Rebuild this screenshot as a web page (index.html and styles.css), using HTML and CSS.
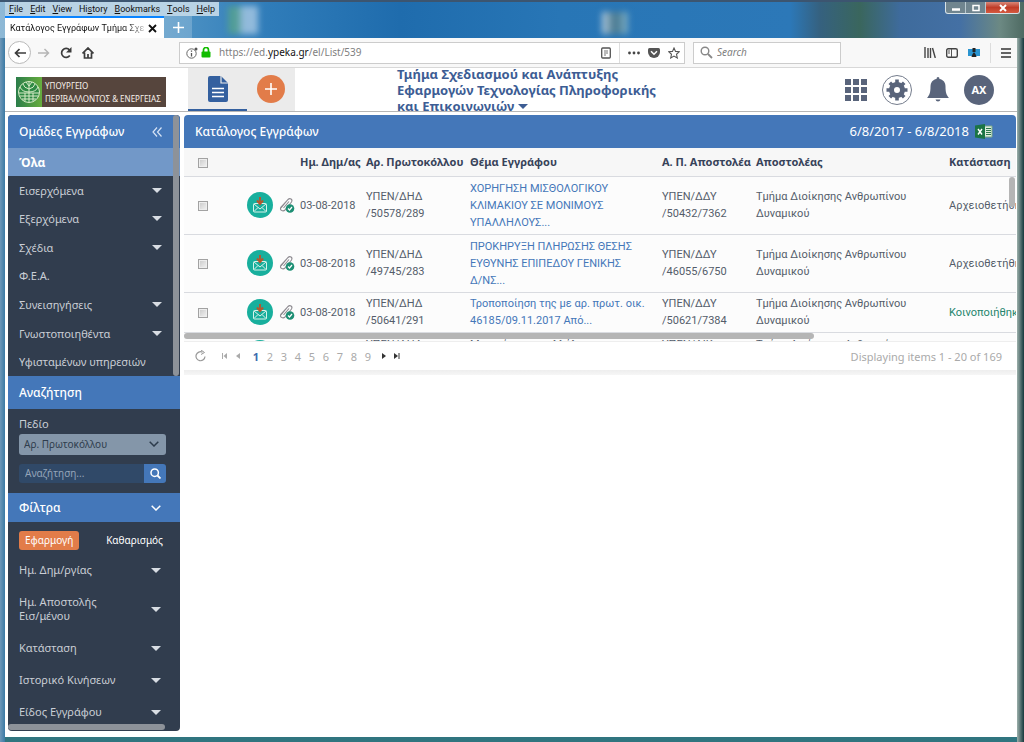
FILE: index.html
```html
<!DOCTYPE html>
<html lang="el">
<head>
<meta charset="utf-8">
<title>Κατάλογος Εγγράφων Τμήμα Σχεδιασμού</title>
<link rel="stylesheet" href="styles.css">
</head>
<body>
<svg class="defs" aria-hidden="true">
  <symbol id="mail" viewBox="0 0 26 26">
    <circle cx="13" cy="13" r="13" fill="#18af9d"/>
    <rect x="6.5" y="11.5" width="13" height="8.5" rx="1" fill="none" stroke="#d8f3ea"/>
    <path d="M7 12l6 5 6-5M7 19.500l4-4M19 19.500l-4-4" fill="none" stroke="#d8f3ea"/>
    <path d="M13 5v7M10 8.500l3 3.500 3-3.500" fill="none" stroke="#b3572f" stroke-width="2"/>
  </symbol>
  <symbol id="clip" viewBox="0 0 16 16">
    <path d="M2 11L9 2.500c2-2 5 0 3.500 2.500L6 13c-2 2-6 0-4-3L8.500 3M4.500 11L10 4.500" fill="none" stroke="#8d8a90" stroke-width="1.100"/>
    <circle cx="11" cy="11.500" r="4.300" fill="#1d8f74"/>
    <path d="M9 11.500l1.500 1.500 2.500-3" fill="none" stroke="#fff" stroke-width="1.200"/>
  </symbol>
</svg>

<div class="window">
  <header class="titlebar">
    <nav class="menubar">
      <button><u>F</u>ile</button><button><u>E</u>dit</button><button><u>V</u>iew</button><button>Hi<u>s</u>tory</button><button><u>B</u>ookmarks</button><button><u>T</u>ools</button><button><u>H</u>elp</button>
    </nav>
    <div class="tabs">
      <div class="tab"><span class="tab-title">Κατάλογος Εγγράφων Τμήμα Σχεδ</span>
        <button aria-label="Close tab"><svg width="9" height="9" viewBox="0 0 9 9"><path d="M1 1l7 7M8 1l-7 7" stroke="#111" stroke-width="1.800"/></svg></button></div>
      <button class="newtab" aria-label="New tab"><svg width="11" height="11" viewBox="0 0 11 11"><path d="M5.500 0v11M0 5.500h11" stroke="#fff" stroke-width="1.600"/></svg></button>
    </div>
    <div class="wallpaper" aria-hidden="true"><i class="spot sheet"></i><i class="spot camera"></i></div>
    <div class="controls">
      <button aria-label="Minimize"><svg width="8" height="8"><path d="M0 5.500h8" stroke="#fff" stroke-width="2.500"/></svg></button>
      <button aria-label="Restore"><svg width="8" height="8"><rect x="1" y="1.500" width="6" height="5" fill="none" stroke="#fff" stroke-width="1.500"/></svg></button>
      <button class="close" aria-label="Close"><svg width="8" height="8"><path d="M1 1l6 6M7 1l-6 6" stroke="#fff" stroke-width="2"/></svg></button>
    </div>
  </header>

  <div class="toolbar">
    <button class="back" aria-label="Back"><svg width="12" height="10" viewBox="0 0 12 10"><path d="M12 5H1.500M5.500 1l-4 4 4 4" fill="none" stroke="#3c3c3c" stroke-width="1.700"/></svg></button>
    <button aria-label="Forward"><svg width="12" height="10" viewBox="0 0 12 10"><path d="M0 5h10.500M6.500 1l4 4-4 4" fill="none" stroke="#b5b5b5" stroke-width="1.500"/></svg></button>
    <button aria-label="Reload"><svg width="12" height="12" viewBox="0 0 12 12"><path d="M9.800 8.500A4.500 4.500 0 1 1 9.500 3" fill="none" stroke="#3c3c3c" stroke-width="1.700"/><path d="M11.500 0v5.500H6z" fill="#3c3c3c"/></svg></button>
    <button aria-label="Home"><svg width="12" height="12" viewBox="0 0 12 12"><path d="M.5 6.500L6 1l5.500 5.500M2.500 5.500V11h7V5.500M6 11V7" fill="none" stroke="#3c3c3c" stroke-width="1.700"/></svg></button>
    <div class="urlbar">
      <svg width="12" height="12" viewBox="0 0 12 12"><circle cx="5.500" cy="6.500" r="4.700" fill="none" stroke="#666"/><path d="M5.500 6v3.500M5.500 3.500v1.300" stroke="#555" stroke-width="1.300"/><circle cx="10" cy="2" r="1.500" fill="#555"/></svg>
      <svg width="10" height="11" viewBox="0 0 10 11"><path d="M2.500 5V3a2.500 2.500 0 0 1 5 0v2" fill="none" stroke="#12bc00" stroke-width="1.700"/><rect x=".5" y="4.500" width="9" height="6" rx="1" fill="#12bc00"/></svg>
      <a class="address" href="#">https://ed.<b>ypeka.gr</b>/el/List/539</a>
      <button aria-label="Reader view"><svg width="10" height="12" viewBox="0 0 10 12"><rect x=".7" y="1" width="8.600" height="10" rx="1" fill="none" stroke="#555" stroke-width="1.300"/><path d="M3 4h4M3 6h4M3 8h2" stroke="#777"/></svg></button>
      <span class="divider"></span>
      <button aria-label="Page actions"><svg width="12" height="4"><g fill="#444"><circle cx="1.500" cy="2" r="1.400"/><circle cx="6" cy="2" r="1.400"/><circle cx="10.500" cy="2" r="1.400"/></g></svg></button>
      <button aria-label="Pocket"><svg width="12" height="10" viewBox="0 0 12 10"><path d="M1.500 0h9Q12 0 12 1.500V4a6 6 0 0 1-12 0V1.500Q0 0 1.500 0z" fill="#555"/><path d="M3 3.200l3 3 3-3" fill="none" stroke="#fff" stroke-width="1.500"/></svg></button>
      <button aria-label="Bookmark"><svg width="12" height="12" viewBox="0 0 12 12"><path d="M6 1l1.500 3.400 3.700.4-2.700 2.500.8 3.700L6 9.100 2.700 11l.8-3.700L.8 4.800l3.700-.4z" fill="none" stroke="#555" stroke-width="1.100"/></svg></button>
    </div>
    <label class="searchbox"><svg width="13" height="13" viewBox="0 0 13 13"><circle cx="5" cy="5" r="3.800" fill="none" stroke="#888" stroke-width="1.400"/><path d="M8 8l4 4" stroke="#888" stroke-width="1.800"/></svg><input type="text" placeholder="Search" aria-label="Search"></label>
    <div class="tools">
      <button aria-label="Library"><svg width="12" height="11" viewBox="0 0 12 11"><path d="M1 0v11M4 1v10M6.500 1v10M8.500 1l2.800 10" stroke="#444" stroke-width="1.400"/></svg></button>
      <button aria-label="Sidebars"><svg width="12" height="10" viewBox="0 0 12 10"><rect x=".7" y=".7" width="10.600" height="8.600" rx="1.500" fill="none" stroke="#444" stroke-width="1.400"/><path d="M5.500 1v8M2 3h2M2 5h2" stroke="#555"/></svg></button>
      <button aria-label="Extension"><svg width="12" height="9" viewBox="0 0 12 9"><path d="M0 1h12v7H0z" fill="#2a94d0"/><path d="M6 0v4" stroke="#222" stroke-width="3"/><path d="M3.500 9q2.500-9 5 0z" fill="#222"/></svg></button>
      <span class="divider"></span>
      <button aria-label="Menu"><svg width="10" height="10"><path d="M0 1h10M0 5h10M0 9h10" stroke="#333" stroke-width="1.500"/></svg></button>
    </div>
  </div>

  <div class="app">
    <header class="appbar">
      <a class="logo" href="#">
        <svg width="26" height="30" viewBox="0 0 26 30"><defs><linearGradient id="lg"><stop offset="0" stop-color="#2b7d4a"/><stop offset="1" stop-color="#67ad3e"/></linearGradient></defs><rect width="26" height="30" fill="url(#lg)"/><circle cx="13" cy="15" r="10.500" fill="#2f8a45" stroke="#d9ecc8"/><path d="M3 16h20M4 19h18M6 22h14M13 5v20M9 16v8M17 16v8M13 15Q6 15 4 10M13 15q7 0 9-5M13 12Q8 11 7 7M13 12q5-1 6-5M13 9l-3-4M13 9l3-4" fill="none" stroke="#d9ecc8"/></svg>
        <span>ΥΠΟΥΡΓΕΙΟ<br>ΠΕΡΙΒΑΛΛΟΝΤΟΣ &amp; ΕΝΕΡΓΕΙΑΣ</span>
      </a>
      <nav class="modes">
        <a class="mode active" href="#" aria-label="Έγγραφα"><svg width="20" height="26" viewBox="0 0 20 26"><path d="M2 0h11l7 7v17q0 2-2 2H2q-2 0-2-2V2Q0 0 2 0z" fill="#34609f"/><path d="M13 0v7h7" fill="none" stroke="#ebebeb" stroke-width="1.200"/><path d="M4 12.500h12M4 16.500h12M4 20.500h12" stroke="#fff" stroke-width="1.600"/></svg></a>
        <button class="mode add" aria-label="Νέο"><svg width="28" height="28" viewBox="0 0 28 28"><circle cx="14" cy="14" r="14" fill="#e27c49"/><path d="M14 8v12M8 14h12" stroke="#fff" stroke-width="1.600"/></svg></button>
      </nav>
      <button class="unit">Τμήμα Σχεδιασμού και Ανάπτυξης Εφαρμογών Τεχνολογίας Πληροφορικής και Επικοινωνιών <i class="caret"></i></button>
      <div class="actions">
        <button aria-label="Εφαρμογές"><svg width="22" height="22" viewBox="0 0 22 22"><path d="M0 0h6v6H0zM8 0h6v6H8zM16 0h6v6h-6zM0 8h6v6H0zM8 8h6v6H8zM16 8h6v6h-6zM0 16h6v6H0zM8 16h6v6H8zM16 16h6v6h-6z" fill="#59647b"/></svg></button>
        <button aria-label="Ρυθμίσεις"><svg width="30" height="30" viewBox="0 0 30 30"><circle cx="15" cy="15" r="14.500" fill="#fff" stroke="#747c8c"/><circle cx="15" cy="15" r="5.500" fill="none" stroke="#59647b" stroke-width="5"/><path d="M15 4.500v4M15 21.500v4M4.500 15h4M21.500 15h4M7.800 7.800l3 3M19.200 19.200l3 3M7.800 22.200l3-3M19.200 10.800l3-3" stroke="#59647b" stroke-width="3.600"/></svg></button>
        <button aria-label="Ειδοποιήσεις"><svg width="22" height="25" viewBox="0 0 22 25"><path d="M11 0q1.500 0 1.500 2c4 .7 6 3.800 6 7.500 0 6.500 1 8.500 3.500 11.500H0c2.500-3 3.500-5 3.500-11.500 0-3.700 2-6.800 6-7.500Q9.500 0 11 0zM8.500 22.500h5q-.5 2-2.500 2t-2.500-2z" fill="#59647b"/></svg></button>
        <button class="avatar">AX</button>
      </div>
    </header>

    <div class="content">
      <aside class="sidebar">
        <section class="groups">
          <h2>Ομάδες Εγγράφων <button aria-label="Σύμπτυξη"><svg width="10" height="10" viewBox="0 0 10 10"><path d="M5 .5L1 5l4 4.500M9.500.5l-4 4.500 4 4.500" fill="none" stroke="#d5e2f4" stroke-width="1.200"/></svg></button></h2>
          <a class="all" href="#">Όλα</a>
          <nav class="group-list">
            <a href="#">Εισερχόμενα<i class="caret"></i></a>
            <a href="#">Εξερχόμενα<i class="caret"></i></a>
            <a href="#">Σχέδια<i class="caret"></i></a>
            <a href="#">Φ.Ε.Α.</a>
            <a href="#">Συνεισηγήσεις<i class="caret"></i></a>
            <a href="#">Γνωστοποιηθέντα<i class="caret"></i></a>
            <a href="#">Υφισταμένων υπηρεσιών</a>
          </nav>
          <span class="vthumb"></span>
        </section>
        <section>
          <h2>Αναζήτηση</h2>
          <form class="search">
            <label for="field">Πεδίο</label>
            <div class="select"><select id="field"><option>Αρ. Πρωτοκόλλου</option></select><svg width="10" height="6" viewBox="0 0 10 6"><path d="M.7.700L5 5 9.300.7" fill="none" stroke="#2d3c4c" stroke-width="1.500"/></svg></div>
            <div class="query"><input type="text" placeholder="Αναζήτηση..." aria-label="Αναζήτηση"><button type="button" aria-label="Αναζήτηση"><svg width="11" height="11" viewBox="0 0 11 11"><circle cx="4.700" cy="4.700" r="3.700" fill="none" stroke="#fff" stroke-width="1.500"/><path d="M7.500 7.500l3 3" stroke="#fff" stroke-width="1.800"/></svg></button></div>
          </form>
        </section>
        <section class="filters">
          <h2 class="short">Φίλτρα <svg width="10" height="6" viewBox="0 0 10 6"><path d="M.7.700L5 5 9.300.7" fill="none" stroke="#fff" stroke-width="1.500"/></svg></h2>
          <div class="filter-actions"><button class="apply">Εφαρμογή</button><button class="clear">Καθαρισμός</button></div>
          <nav class="filter-list">
            <a href="#">Ημ. Δημ/ργίας<i class="caret"></i></a>
            <a href="#">Ημ. Αποστολής<br>Εισ/μένου<i class="caret"></i></a>
            <a href="#">Κατάσταση<i class="caret"></i></a>
            <a href="#">Ιστορικό Κινήσεων<i class="caret"></i></a>
            <a href="#">Είδος Εγγράφου<i class="caret"></i></a>
          </nav>
          <span class="hthumb"></span>
        </section>
      </aside>

      <main class="list">
        <div class="list-head"><h1>Κατάλογος Εγγράφων</h1><span>6/8/2017 - 6/8/2018</span>
          <button aria-label="Excel"><svg width="18" height="15" viewBox="0 0 18 15"><path d="M9 2h8v11H9z" fill="#dcebdc" stroke="#78a886"/><path d="M11 4.500h5M11 6.500h5M11 8.500h5M11 10.500h5" stroke="#2b7a4c"/><path d="M0 1.500L10 0v15L0 13.500z" fill="#1b7446"/><path d="M3 5l4 5.500M7 5l-4 5.500" stroke="#fff" stroke-width="1.400"/></svg></button>
        </div>
        <div class="grid">
          <table>
            <colgroup><col class="c-check"><col class="c-icons"><col class="c-date"><col class="c-prot"><col class="c-subject"><col class="c-sprot"><col class="c-sender"><col></colgroup>
            <thead><tr><th><input type="checkbox" aria-label="Επιλογή όλων"></th><th></th><th>Ημ. Δημ/ας</th><th>Αρ. Πρωτοκόλλου</th><th>Θέμα Εγγράφου</th><th>Α. Π. Αποστολέα</th><th>Αποστολέας</th><th>Κατάσταση</th></tr></thead>
            <tbody>
              <tr class="tall"><td><input type="checkbox" aria-label="Επιλογή"></td><td><div class="icons"><svg width="26" height="26"><use href="#mail"/></svg><svg width="16" height="16"><use href="#clip"/></svg></div></td><td>03-08-2018</td><td>ΥΠΕΝ/ΔΗΔ<br>/50578/289</td><td><a href="#">ΧΟΡΗΓΗΣΗ ΜΙΣΘΟΛΟΓΙΚΟΥ<br>ΚΛΙΜΑΚΙΟΥ ΣΕ ΜΟΝΙΜΟΥΣ<br>ΥΠΑΛΛΗΛΟΥΣ...</a></td><td>ΥΠΕΝ/ΔΔΥ<br>/50432/7362</td><td>Τμήμα Διοίκησης Ανθρωπίνου<br>Δυναμικού</td><td>Αρχειοθετήθηκε</td></tr>
              <tr class="tall"><td><input type="checkbox" aria-label="Επιλογή"></td><td><div class="icons"><svg width="26" height="26"><use href="#mail"/></svg><svg width="16" height="16"><use href="#clip"/></svg></div></td><td>03-08-2018</td><td>ΥΠΕΝ/ΔΗΔ<br>/49745/283</td><td><a href="#">ΠΡΟΚΗΡΥΞΗ ΠΛΗΡΩΣΗΣ ΘΕΣΗΣ<br>ΕΥΘΥΝΗΣ ΕΠΙΠΕΔΟΥ ΓΕΝΙΚΗΣ<br>Δ/ΝΣ...</a></td><td>ΥΠΕΝ/ΔΔΥ<br>/46055/6750</td><td>Τμήμα Διοίκησης Ανθρωπίνου<br>Δυναμικού</td><td>Αρχειοθετήθηκε</td></tr>
              <tr><td><input type="checkbox" aria-label="Επιλογή"></td><td><div class="icons"><svg width="26" height="26"><use href="#mail"/></svg><svg width="16" height="16"><use href="#clip"/></svg></div></td><td>03-08-2018</td><td>ΥΠΕΝ/ΔΗΔ<br>/50641/291</td><td><a href="#">Τροποποίηση της με αρ. πρωτ. οικ.<br>46185/09.11.2017 Από...</a></td><td>ΥΠΕΝ/ΔΔΥ<br>/50621/7384</td><td>Τμήμα Διοίκησης Ανθρωπίνου<br>Δυναμικού</td><td class="sent">Κοινοποιήθηκε</td></tr>
              <tr class="next"><td></td><td><div class="icons"><svg width="26" height="26"><use href="#mail"/></svg></div></td><td></td><td>ΥΠΕΝ/ΔΗΔ</td><td>Μετακίνηση υπαλλήλων</td><td>ΥΠΕΝ/ΔΙΚ</td><td>Τμήμα Διοίκησης Ανθρωπίνου</td><td></td></tr>
            </tbody>
          </table>
          <span class="grid-v"></span><span class="grid-h"></span>
        </div>
        <footer class="pager">
          <button class="reload" aria-label="Ανανέωση"><svg width="11" height="12" viewBox="0 0 11 12"><path d="M7.500 2.200A4.500 4.500 0 1 0 10 6.500" fill="none" stroke="#999" stroke-width="1.200"/><path d="M6 0l3.500 2.500L6 4.500" fill="none" stroke="#999"/></svg></button>
          <button aria-label="Πρώτη"><svg width="6" height="6"><path d="M.5 0v6" stroke="#aaa"/><path d="M5 0v6L1.500 3z" fill="#aaa"/></svg></button>
          <button class="prev" aria-label="Προηγούμενη"><svg width="4" height="6"><path d="M4 0v6L0 3z" fill="#aaa"/></svg></button>
          <nav class="pages"><a class="on" href="#">1</a><a href="#">2</a><a href="#">3</a><a href="#">4</a><a href="#">5</a><a href="#">6</a><a href="#">7</a><a href="#">8</a><a href="#">9</a></nav>
          <button aria-label="Επόμενη"><svg width="4" height="6"><path d="M0 0v6l4-3z" fill="#333"/></svg></button>
          <button class="last" aria-label="Τελευταία"><svg width="6" height="6"><path d="M5 0v6" stroke="#333"/><path d="M0 0v6l4-3z" fill="#333"/></svg></button>
          <span class="total">Displaying items 1 - 20 of 169</span>
        </footer>
      </main>
    </div>
  </div>
</div>
</body>
</html>
```
FILE: styles.css
```css
* { box-sizing: border-box; }
body { margin: 0; font: 11px/17px "Noto Sans", "Open Sans", sans-serif; color: #545c6a; }
button { border: 0; padding: 0; background: none; font: inherit; color: inherit; display: flex; align-items: center; justify-content: center; }
a { color: inherit; text-decoration: none; }
h1, h2 { margin: 0; font-weight: 500; }
input, select { font: inherit; }
svg { flex: none; display: block; }
.defs { position: absolute; width: 0; height: 0; }
.caret { flex: none; display: inline-block; border: 5px solid transparent; border-top-color: currentColor; border-bottom: 0; }

.window { min-height: 100vh; display: flex; flex-direction: column; padding: 0 7px 5px 5px; border-top: 2px solid #3c5570; background: linear-gradient(90deg, #6e97b8 0, #3b7aa4 5px, transparent 5px, transparent calc(100% - 7px), #9cb0ab calc(100% - 7px), #16383c 100%), linear-gradient(#3b7aa4, #30757f); }

.titlebar { position: relative; height: 36px; display: flex; flex-direction: column; margin: 0 -7px 0 -5px; padding-left: 5px; color: #111; background: linear-gradient(90deg, #8fb9d6 0, #4c91c3 180px, #2f7cb9 270px, #1f6cad 400px, #2876b6 560px, #2c78b8 790px, #35617f 820px, #3a665d 860px, #3e6b9c 900px, #4470a4 960px, #6c8983 1000px, #4e6a62 100%); }
.menubar { position: relative; z-index: 1; align-self: flex-start; display: flex; height: 14px; gap: 7px; padding: 0 4px; background: #b9d3e5; font: 9px/12px Roboto, sans-serif; }
.tabs { position: relative; z-index: 1; display: flex; height: 22px; }
.tab { width: 159px; display: flex; align-items: center; gap: 4px; padding: 0 7px 0 5px; background: #fff; border-top: 2px solid #0a84ff; font-family: Roboto, sans-serif; font-size: 9px; }
.tab-title { flex: 1; overflow: hidden; white-space: nowrap; -webkit-mask: linear-gradient(90deg, #000 84%, #0004); mask: linear-gradient(90deg, #000 84%, #0004); }
.newtab { width: 28px; background: #ffffff33; }
.wallpaper { position: absolute; inset: 0; overflow: hidden; }
.spot { position: absolute; filter: blur(3px); }
.sheet { left: 228px; top: 4px; width: 30px; height: 28px; background: linear-gradient(90deg, #57a38c 30%, #a9c9e4 50%); opacity: .8; }
.camera { left: 602px; top: 10px; width: 26px; height: 22px; background: linear-gradient(90deg, #b5cde0, #44758c 50%, #7db0ca); }
.controls { position: absolute; right: 4px; top: 0; z-index: 1; display: flex; height: 12px; border: 1px solid #d7e2e8; border-top: 0; border-radius: 0 0 3px 3px; overflow: hidden; background: #70858f; }
.controls button { width: 20px; border-right: 1px solid #b8c8cf; }
.controls .close { width: 33px; border: 0; background: linear-gradient(#d98778, #c03c28 50%, #d65a40); }

.toolbar { display: flex; align-items: center; height: 30px; padding: 0 5px 0 3px; background: #f8f8f8; border-bottom: 1px solid #d8d8d8; }
.toolbar > button { width: 22px; }
.toolbar > .back { width: 23px; height: 23px; border: 1px solid #b9b9b9; border-radius: 50%; background: #fff; margin-right: 2px; }
.urlbar { flex: 1; display: flex; align-items: center; height: 22px; margin-left: 80px; padding: 0 4px 0 6px; gap: 8px; background: #fff; border: 1px solid #ccc; font-size: 10px; color: #808080; }
.urlbar svg + svg { margin-left: -5px; }
.address { flex: 1; }
.address b { font-weight: 400; color: #111; }
.divider { width: 1px; height: 20px; background: #ddd; }
.searchbox { display: flex; align-items: center; gap: 4px; width: 148px; height: 22px; margin-left: 8px; padding: 0 6px; background: #fff; border: 1px solid #ccc; }
.searchbox input { min-width: 0; flex: 1; border: 0; padding: 0; font-size: 10px; font-style: italic; background: none; }
.searchbox input::placeholder { color: #808080; opacity: 1; }
.tools { display: flex; align-items: center; gap: 10px; width: 171px; justify-content: flex-end; padding-right: 1px; }

.app { flex: 1; display: flex; flex-direction: column; background: #fff; }
.appbar { display: flex; align-items: center; height: 44px; padding: 0 23px 0 11px; border-bottom: 1px solid #b6b6b6; }
.logo { display: flex; flex: none; height: 30px; width: 150px; margin-top: 5px; background: #56453d; color: #f6f0ea; font-size: 8px; line-height: 13px; white-space: nowrap; }
.logo span { padding: 2px 0 0 3px; }
.modes { display: flex; align-self: stretch; margin-left: 22px; background: #ebebeb; }
.mode { display: flex; align-items: center; justify-content: center; width: 59px; border-bottom: 2px solid transparent; }
.mode.active { border-color: #34609f; }
.mode.add { width: 48px; }
.unit { display: inline-block; width: 276px; margin-left: 102px; font-size: 13px; line-height: 16px; font-weight: 700; color: #3d5d94; text-align: left; }
.unit .caret { vertical-align: 2px; }
.actions { display: flex; align-items: center; gap: 15px; margin-left: auto; }
.avatar { width: 30px; height: 30px; border-radius: 50%; background: #59647b; color: #fff; font-size: 11px; font-weight: 700; }

.content { display: flex; gap: 4px; padding: 3px 1px 6px 3px; flex: 1; align-items: flex-start; }
.sidebar { width: 172px; flex: none; overflow: hidden; border-radius: 4px; background: #313d4e; color: #c9ced5; }
h2, .list-head { display: flex; align-items: center; height: 33px; padding-left: 11px; background: #4477b9; color: #fff; font-size: 12px; }
h2 { justify-content: space-between; padding-right: 18px; }
h2.short { height: 29px; padding-right: 19px; }
.groups { position: relative; }
.all { display: flex; align-items: center; height: 28px; padding-left: 11px; background: #7298c8; color: #fff; font-size: 12px; font-weight: 700; }
.group-list { display: grid; grid-template-rows: repeat(7, 1fr); height: 200px; }
.group-list a, .filter-list a { display: flex; align-items: center; padding: 0 18px 0 11px; white-space: nowrap; }
.group-list .caret, .filter-list .caret { margin-left: auto; color: #d8dde3; }
.vthumb { position: absolute; right: 1px; top: 0; width: 6px; height: 100%; border-radius: 3px; background: #8d9299; }
.search { padding: 6px 14px 10px 11px; }
.search label { display: block; height: 19px; }
.select { position: relative; }
.select select { appearance: none; display: block; width: 100%; height: 21px; padding: 0 5px; border: 0; border-radius: 3px; background: #8496a9; color: #2f3d4d; font-size: 10px; }
.select svg { position: absolute; right: 7px; top: 7px; pointer-events: none; }
.query { display: flex; height: 19px; margin-top: 9px; border-radius: 3px; overflow: hidden; }
.query input { flex: 1; min-width: 0; border: 0; padding: 0 6px; background: #304968; color: #fff; font-size: 10px; }
.query input::placeholder { color: #94a4b8; opacity: 1; }
.query button { width: 22px; background: #4477b9; }
.filter-actions { display: flex; justify-content: space-between; padding: 9px 17px 0 11px; color: #fff; font-size: 10px; }
.apply { height: 19px; padding: 0 6px; border-radius: 3px; background: #e27c49; }
.filter-list { padding-top: 4px; }
.filter-list a { height: 32px; line-height: 14px; padding-right: 19px; }
.filter-list a:nth-child(2) { height: 46px; }
.hthumb { display: block; width: 157px; height: 6px; margin: -4px 0 1px; border-radius: 3px; position: relative; background: #8d9299; }

.list { flex: 1; min-width: 0; padding-bottom: 5px; background: linear-gradient(#eee, #f6f6f6) bottom / 100% 5px no-repeat; }
.list-head { border-radius: 4px 4px 0 0; padding-right: 23px; }
.list-head h1 { flex: 1; font-size: 12px; }
.list-head span { margin-right: 6px; font-size: 13px; }
.grid { position: relative; height: 193px; overflow: hidden; background: #fcfcfc; }
table { width: 100%; table-layout: fixed; border-collapse: collapse; }
.c-check { width: 37px; } .c-icons { width: 79px; } .c-date { width: 66px; } .c-prot { width: 104px; }
.c-subject { width: 192px; } .c-sprot { width: 94px; } .c-sender { width: 193px; }
th, td { padding: 0; text-align: left; white-space: nowrap; border-bottom: 1px solid #d9dbe0; }
th:first-child, td:first-child { text-align: center; }
th { height: 28px; background: #f7f7f7; color: #37435a; }
td { height: 40px; font-family: Roboto, "Noto Sans", sans-serif; }
.tall td { height: 58px; }
.next td { padding-top: 3px; vertical-align: top; }
td a { color: #4477b9; }
.sent { color: #24856c; }
td:last-child { overflow: hidden; }
.icons { display: flex; align-items: center; gap: 6px; padding-left: 26px; }
.next .icons { padding-top: 4px; }
input[type="checkbox"] { appearance: none; display: inline-block; width: 10px; height: 10px; margin: 0; border: 1px solid #a2a2a2; background: linear-gradient(135deg, #c9c9c9, #f4f4f4); outline: 1px solid #eee; outline-offset: -2px; vertical-align: middle; }
.grid-v { position: absolute; right: 1px; top: 29px; width: 6px; height: 30px; border-radius: 3px; background: #b5b5b5; }
.grid-h { position: absolute; left: 0; bottom: 2px; width: 630px; max-width: 76%; height: 6px; border-radius: 3px; background: #b5b5b5; }
.pager { display: flex; align-items: center; height: 29px; padding: 0 14px 0 11px; background: #fff; border-top: 1px solid #eee; color: #aaa; }
.reload { margin-right: 16px; }
.prev { margin-left: 8px; }
.pages { display: flex; margin: 0 7px 0 9px; }
.pages a { width: 14px; text-align: center; }
.pages .on { color: #3d6cae; font-weight: 700; }
.last { margin-left: 8px; }
.total { margin-left: auto; }
```
